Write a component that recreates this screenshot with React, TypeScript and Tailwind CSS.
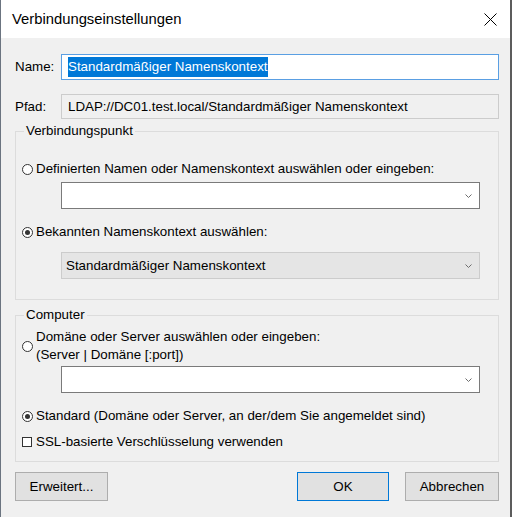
import type { ReactNode } from 'react';

function Radio({ checked }: { checked?: boolean }) {
  return (
    <span className="w-[11px] h-[11px] shrink-0 rounded-full border border-[#333333] bg-white flex items-center justify-center">
      {checked && <span className="w-[5px] h-[5px] rounded-full bg-[#333333]" />}
    </span>
  );
}

function Chevron() {
  return (
    <svg width="7" height="4" viewBox="0 0 7 4" className="shrink-0">
      <path d="M0.5 0.5 L3.5 3.5 L6.5 0.5" fill="none" stroke="#6d6d6d" strokeWidth="1" />
    </svg>
  );
}

function Combo({ disabled, children }: { disabled?: boolean; children?: ReactNode }) {
  return (
    <div
      className={
        disabled
          ? 'ml-[45px] w-[419px] h-[27px] flex items-center pl-[4px] pr-[7px] border border-[#cccccc] bg-[#e5e5e5]'
          : 'ml-[45px] w-[419px] h-[27px] flex items-center pl-[4px] pr-[7px] border border-[#7a7a7a] bg-white'
      }
    >
      <span className="flex-1">{children}</span>
      <Chevron />
    </div>
  );
}

function Button({ label, primary, className }: { label: string; primary?: boolean; className?: string }) {
  return (
    <div
      className={`h-[29px] flex items-center justify-center bg-[#e1e1e1] border ${
        primary ? 'border-[#0078d7]' : 'border-[#adadad]'
      } ${className ?? ''}`}
    >
      {label}
    </div>
  );
}

export default function App() {
  return (
    <div
      className="w-[512px] h-[517px] flex flex-col bg-[#f0f0f0] border-l border-l-[#6b7480] border-r-2 border-r-[#5c5c5c] text-black text-[13.35px] leading-[16px]"
      style={{ fontFamily: '"Liberation Sans", Arial, sans-serif' }}
    >
      {/* title bar */}
      <div className="h-[38px] shrink-0 bg-white flex items-center pl-[11px]">
        <span className="text-[14.8px]">Verbindungseinstellungen</span>
        <svg width="13" height="13" viewBox="0 0 13 13" className="ml-auto mr-[13px]">
          <path d="M0.5 0.5 L12.5 12.5 M12.5 0.5 L0.5 12.5" stroke="#000" strokeWidth="1" />
        </svg>
      </div>

      <div className="flex flex-col pl-[14px] pr-[11px]">
        {/* Name */}
        <div className="mt-[16px] h-[26px] flex items-center">
          <span className="w-[46px]">Name:</span>
          <div className="flex-1 h-[26px] border border-[#5a9fe3] bg-white flex items-center pl-[6px]">
            <span className="bg-[#0078d7] text-white leading-[20px]">Standardmäßiger Namenskontext</span>
          </div>
        </div>

        {/* Pfad */}
        <div className="mt-[14px] h-[25px] flex items-center">
          <span className="w-[46px]">Pfad:</span>
          <div className="flex-1 h-[25px] border border-[#cccccc] bg-[#f0f0f0] flex items-center pl-[6px]">
            LDAP://DC01.test.local/Standardmäßiger Namenskontext
          </div>
        </div>

        {/* Verbindungspunkt */}
        <fieldset className="mt-[4px] border border-[#dcdcdc] pb-[20px]">
          <legend className="ml-[8px] px-[2px] leading-[16px]">Verbindungspunkt</legend>
          <div className="mt-[22px] pl-[6px] flex items-center">
            <Radio />
            <span className="ml-[3px]">Definierten Namen oder Namenskontext auswählen oder eingeben:</span>
          </div>
          <div className="mt-[5px]">
            <Combo />
          </div>
          <div className="mt-[15px] pl-[6px] flex items-center">
            <Radio checked />
            <span className="ml-[3px]">Bekannten Namenskontext auswählen:</span>
          </div>
          <div className="mt-[12px]">
            <Combo disabled>Standardmäßiger Namenskontext</Combo>
          </div>
        </fieldset>

        {/* Computer */}
        <fieldset className="mt-[7px] border border-[#dcdcdc] pb-[11px]">
          <legend className="ml-[8px] px-[2px] leading-[16px]">Computer</legend>
          <div className="mt-[5px] pl-[6px] flex items-center">
            <Radio />
            <span className="ml-[3px] leading-[18px]">
              Domäne oder Server auswählen oder eingeben:
              <br />
              (Server | Domäne [:port])
            </span>
          </div>
          <div className="mt-[2px]">
            <Combo />
          </div>
          <div className="mt-[15px] pl-[6px] flex items-center">
            <Radio checked />
            <span className="ml-[3px]">Standard (Domäne oder Server, an der/dem Sie angemeldet sind)</span>
          </div>
          <div className="mt-[10px] pl-[6px] flex items-center">
            <span className="w-[10px] h-[10px] shrink-0 border border-[#333333] bg-white" />
            <span className="ml-[4px]">SSL-basierte Verschlüsselung verwenden</span>
          </div>
        </fieldset>

        {/* buttons */}
        <div className="mt-[10px] flex items-center">
          <Button label="Erweitert..." className="w-[93px]" />
          <Button label="OK" primary className="w-[92px] ml-auto" />
          <Button label="Abbrechen" className="w-[94px] ml-[16px]" />
        </div>
      </div>
    </div>
  );
}
